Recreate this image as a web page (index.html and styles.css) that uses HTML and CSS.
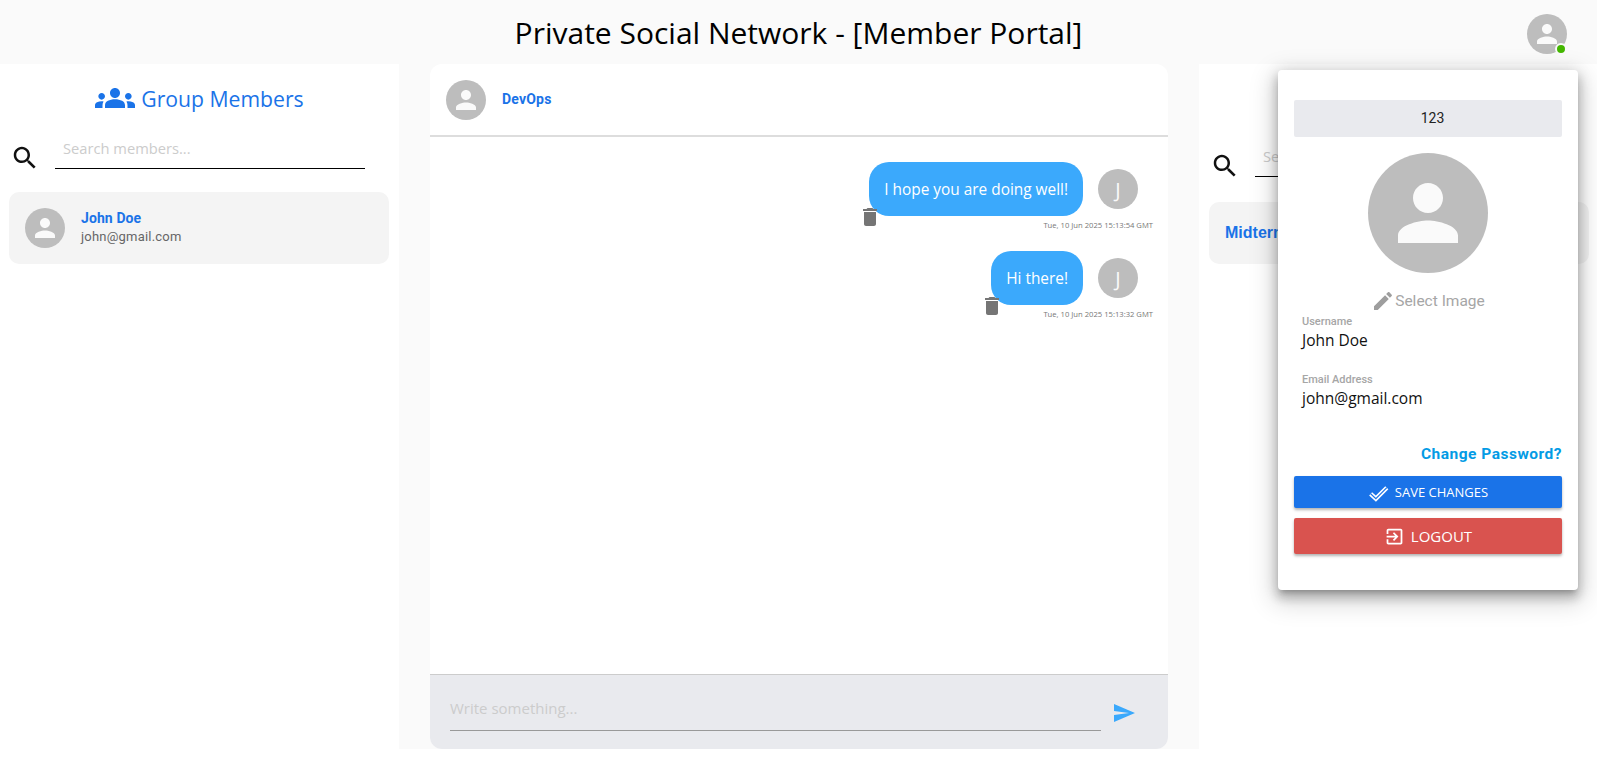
FILE: index.html
```html
<!DOCTYPE html>
<html lang="en">
<head>
    <meta charset="UTF-8">
    <meta name="viewport" content="width=device-width, initial-scale=1.0">
    <title>Private Social Network</title>
    <link rel="stylesheet" href="styles.css">
</head>
<body>
    <header class="topbar">
        <h1 class="topbar-title">Private Social Network - [Member Portal]</h1>
        <div class="account">
            <div class="avatar">
                <svg class="avatar-icon" viewBox="0 0 24 24"><path d="M12 12c2.21 0 4-1.79 4-4s-1.79-4-4-4-4 1.79-4 4 1.79 4 4 4zm0 2c-2.67 0-8 1.34-8 4v2h16v-2c0-2.66-5.33-4-8-4z"/></svg>
            </div>
            <span class="online-dot"></span>
        </div>
    </header>

    <main class="layout">
        <!-- members -->
        <section class="side-panel">
            <h2 class="panel-title">
                <svg class="panel-title-icon" viewBox="0 0 24 24"><path d="M12 12.75c1.63 0 3.07.39 4.24.9 1.08.48 1.76 1.56 1.76 2.73V18H6v-1.61c0-1.18.68-2.26 1.76-2.73 1.17-.52 2.61-.91 4.24-.91zM4 13c1.1 0 2-.9 2-2s-.9-2-2-2-2 .9-2 2 .9 2 2 2zm1.13 1.1c-.37-.06-.74-.1-1.13-.1-.99 0-1.93.21-2.78.58C.48 14.9 0 15.62 0 16.43V18h4.5v-1.61c0-.83.23-1.61.63-2.29zM20 13c1.1 0 2-.9 2-2s-.9-2-2-2-2 .9-2 2 .9 2 2 2zm4 3.43c0-.81-.48-1.53-1.22-1.85-.85-.37-1.79-.58-2.78-.58-.39 0-.76.04-1.13.1.4.68.63 1.46.63 2.29V18H24v-1.57zM12 6c1.66 0 3 1.34 3 3s-1.34 3-3 3-3-1.34-3-3 1.34-3 3-3z"/></svg>
                Group Members
            </h2>
            <div class="search-row">
                <svg class="search-icon" viewBox="0 0 24 24"><path d="M15.5 14h-.79l-.28-.27C15.41 12.59 16 11.11 16 9.5 16 5.91 13.09 3 9.5 3S3 5.91 3 9.5 5.91 16 9.5 16c1.61 0 3.09-.59 4.23-1.57l.27.28v.79l5 4.99L20.49 19l-4.99-5zm-6 0C7.01 14 5 11.99 5 9.5S7.01 5 9.5 5 14 7.01 14 9.5 11.99 14 9.5 14z"/></svg>
                <div class="search-field">Search members...</div>
            </div>
            <div class="member-card">
                <div class="avatar">
                    <svg class="avatar-icon" viewBox="0 0 24 24"><path d="M12 12c2.21 0 4-1.79 4-4s-1.79-4-4-4-4 1.79-4 4 1.79 4 4 4zm0 2c-2.67 0-8 1.34-8 4v2h16v-2c0-2.66-5.33-4-8-4z"/></svg>
                </div>
                <div class="member-info">
                    <div class="member-name">John Doe</div>
                    <div class="member-email">john@gmail.com</div>
                </div>
            </div>
        </section>

        <!-- chat -->
        <section class="chat">
            <div class="chat-header">
                <div class="avatar">
                    <svg class="avatar-icon" viewBox="0 0 24 24"><path d="M12 12c2.21 0 4-1.79 4-4s-1.79-4-4-4-4 1.79-4 4 1.79 4 4 4zm0 2c-2.67 0-8 1.34-8 4v2h16v-2c0-2.66-5.33-4-8-4z"/></svg>
                </div>
                <span class="chat-name">DevOps</span>
            </div>
            <div class="chat-messages">
                <div class="message">
                    <div class="message-row">
                        <div class="bubble">
                            I hope you are doing well!
                            <svg class="trash-icon" viewBox="0 0 24 24"><path d="M6 19c0 1.1.9 2 2 2h8c1.1 0 2-.9 2-2V7H6v12zM19 4h-3.5l-1-1h-5l-1 1H5v2h14V4z"/></svg>
                        </div>
                        <div class="avatar avatar-letter">J</div>
                    </div>
                    <div class="message-time">Tue, 10 Jun 2025 15:13:54 GMT</div>
                </div>
                <div class="message">
                    <div class="message-row">
                        <div class="bubble">
                            Hi there!
                            <svg class="trash-icon" viewBox="0 0 24 24"><path d="M6 19c0 1.1.9 2 2 2h8c1.1 0 2-.9 2-2V7H6v12zM19 4h-3.5l-1-1h-5l-1 1H5v2h14V4z"/></svg>
                        </div>
                        <div class="avatar avatar-letter">J</div>
                    </div>
                    <div class="message-time">Tue, 10 Jun 2025 15:13:32 GMT</div>
                </div>
            </div>
            <div class="chat-footer">
                <div class="chat-input">Write something...</div>
                <svg class="send-icon" viewBox="0 0 24 24"><path d="M2.01 21 23 12 2.01 3 2 10l15 2-15 2z"/></svg>
            </div>
        </section>

        <!-- exams -->
        <section class="side-panel side-panel-right">
            <div class="search-row">
                <svg class="search-icon" viewBox="0 0 24 24"><path d="M15.5 14h-.79l-.28-.27C15.41 12.59 16 11.11 16 9.5 16 5.91 13.09 3 9.5 3S3 5.91 3 9.5 5.91 16 9.5 16c1.61 0 3.09-.59 4.23-1.57l.27.28v.79l5 4.99L20.49 19l-4.99-5zm-6 0C7.01 14 5 11.99 5 9.5S7.01 5 9.5 5 14 7.01 14 9.5 11.99 14 9.5 14z"/></svg>
                <div class="search-field">Search</div>
            </div>
            <div class="exam-card">Midterm</div>
        </section>
    </main>

    <!-- profile menu -->
    <aside class="profile-menu">
        <div class="member-code">123</div>
        <div class="avatar avatar-large">
            <svg class="avatar-icon" viewBox="0 0 24 24"><path d="M12 12c2.21 0 4-1.79 4-4s-1.79-4-4-4-4 1.79-4 4 1.79 4 4 4zm0 2c-2.67 0-8 1.34-8 4v2h16v-2c0-2.66-5.33-4-8-4z"/></svg>
        </div>
        <div class="select-image">
            <svg class="edit-icon" viewBox="0 0 24 24"><path d="M3 17.25V21h3.75L17.81 9.94l-3.75-3.75L3 17.25zM20.71 7.04c.39-.39.39-1.02 0-1.41l-2.34-2.34c-.39-.39-1.02-.39-1.41 0l-1.83 1.83 3.75 3.75 1.83-1.83z"/></svg>
            Select Image
        </div>
        <div class="field">
            <div class="field-label">Username</div>
            <div class="field-value">John Doe</div>
        </div>
        <div class="field">
            <div class="field-label">Email Address</div>
            <div class="field-value">john@gmail.com</div>
        </div>
        <div class="change-password">Change Password?</div>
        <button class="btn btn-save" type="button">
            <svg class="btn-icon" viewBox="0 0 24 24">
                <polyline class="check-outer" points="3,13.5 9,19 21.5,6.5"/>
                <polyline class="check-inner" points="3,13.5 9,19 21.5,6.5"/>
            </svg>
            SAVE CHANGES
        </button>
        <button class="btn btn-logout" type="button">
            <svg class="btn-icon" viewBox="0 0 24 24"><path d="M10.09 15.59 11.5 17l5-5-5-5-1.41 1.41L12.67 11H3v2h9.67l-2.58 2.59zM19 3H5c-1.11 0-2 .9-2 2v4h2V5h14v14H5v-4H3v4c0 1.1.89 2 2 2h14c1.1 0 2-.9 2-2V5c0-1.1-.9-2-2-2z"/></svg>
            LOGOUT
        </button>
    </aside>
</body>
</html>
```

FILE: styles.css
```css
* {
    box-sizing: border-box;
}
html, body {
    height: 100%;
}
body {
    margin: 0;
    background-color: #fff;
    font-family: "Open Sans", sans-serif;
    overflow: hidden;
}
.topbar {
    height: 64px;
    background-color: #fafafa;
    display: flex;
    align-items: center;
    justify-content: center;
    position: relative;
}
.topbar-title {
    margin: 0;
    font-size: 30px;
    font-weight: 400;
    color: #000;
}
.account {
    position: absolute;
    top: 14px;
    left: 1527px;
}
.avatar {
    width: 40px;
    height: 40px;
    border-radius: 50%;
    background-color: #bdbdbd;
    display: flex;
    align-items: center;
    justify-content: center;
    flex-shrink: 0;
}
.avatar-icon {
    width: 75%;
    height: 75%;
    fill: #fafafa;
}
.avatar-letter {
    color: #fafafa;
    font-size: 20px;
}
.avatar-large {
    width: 120px;
    height: 120px;
    margin: 16px auto 0;
}
.online-dot {
    position: absolute;
    right: 0;
    bottom: -1px;
    width: 12px;
    height: 12px;
    border-radius: 50%;
    background-color: #44b700;
    border: 2px solid #fafafa;
}
.layout {
    display: grid;
    grid-template-columns: 399px 31px 738px 31px 398px;
    height: 685px;
    background-color: #fafafa;
}
.side-panel {
    grid-column: 1;
    background-color: #fff;
    padding-top: 16px;
}
.side-panel-right {
    grid-column: 5;
    padding-top: 77px;
}
.panel-title {
    margin: 0;
    display: flex;
    align-items: center;
    justify-content: center;
    gap: 6px;
    height: 36px;
    font-size: 21.2px;
    font-weight: 400;
    color: #1a73e8;
}
.panel-title-icon {
    width: 40px;
    height: 40px;
    fill: #1a73e8;
}
.search-row {
    display: flex;
    align-items: flex-end;
    height: 36px;
    margin-top: 17px;
    padding-left: 10px;
}
.side-panel-right .search-row {
    margin-top: 0;
    padding-left: 11px;
}
.search-icon {
    width: 30px;
    height: 30px;
    margin-bottom: -4px;
    fill: #111;
    flex-shrink: 0;
}
.search-field {
    width: 310px;
    height: 36px;
    margin-left: 15px;
    padding: 5px 0 0 8px;
    border-bottom: 1.5px solid #000;
    font-size: 14.7px;
    color: #ccc;
}
.member-card {
    display: flex;
    align-items: center;
    gap: 16px;
    height: 72px;
    margin: 23px 10px 0 9px;
    padding-left: 16px;
    background-color: #f4f4f4;
    border-radius: 10px;
}
.member-info {
    font-family: Roboto, sans-serif;
    letter-spacing: 0.2px;
}
.member-name {
    font-size: 14px;
    font-weight: 700;
    letter-spacing: 0.1px;
    color: #1a73e8;
    line-height: 18px;
}
.member-email {
    font-size: 13px;
    color: #666;
    line-height: 20px;
}
.exam-card {
    height: 62px;
    margin: 25px 8px 0 10px;
    padding-left: 16px;
    display: flex;
    align-items: center;
    background-color: #f4f4f4;
    border-radius: 10px;
    font-family: "Liberation Sans", sans-serif;
    font-weight: 700;
    font-size: 16px;
    color: #1a73e8;
}
.chat {
    grid-column: 3;
    display: flex;
    flex-direction: column;
    background-color: #fff;
    border-radius: 12px;
    overflow: hidden;
}
.chat-header {
    display: flex;
    align-items: center;
    gap: 16px;
    height: 73px;
    flex-shrink: 0;
    padding-left: 16px;
    border-bottom: 2px solid #ddd;
}
.chat-name {
    margin-top: -2px;
    font-family: Roboto, sans-serif;
    font-size: 14px;
    font-weight: 700;
    color: #1a73e8;
    letter-spacing: 0.2px;
}
.chat-messages {
    flex: 1;
    padding: 25px 15px 0 16px;
}
.message {
    margin-bottom: 24px;
    height: 65px;
}
.message-row {
    display: flex;
    justify-content: flex-end;
    align-items: center;
    gap: 15px;
    padding-right: 15px;
}
.bubble {
    position: relative;
    height: 54px;
    padding: 0 15px;
    display: flex;
    align-items: center;
    border-radius: 20px;
    background-color: #3ba9fc;
    color: #fff;
    font-size: 15.4px;
}
.trash-icon {
    position: absolute;
    left: -11px;
    top: 43px;
    width: 24px;
    height: 24px;
    fill: #757575;
}
.message-time {
    margin-top: 4px;
    text-align: right;
    font-size: 7.65px;
    line-height: 11px;
    color: #777;
}
.chat-footer {
    display: flex;
    align-items: flex-start;
    height: 75px;
    flex-shrink: 0;
    padding: 20px 0 0 20px;
    background-color: #e9eaee;
    border-top: 1px solid #ccc;
}
.chat-input {
    width: 651px;
    height: 36px;
    padding-top: 3px;
    border-bottom: 1px solid #999;
    font-size: 15px;
    color: #ccc;
}
.send-icon {
    width: 24px;
    height: 24px;
    margin: 6px 0 0 11px;
    fill: #3ba9fc;
}
.profile-menu {
    position: absolute;
    left: 1278px;
    top: 70px;
    width: 300px;
    height: 520px;
    padding: 30px 16px 0;
    background-color: #fff;
    border-radius: 4px;
    box-shadow: 0 5px 5px -3px rgba(0,0,0,0.2), 0 8px 10px 1px rgba(0,0,0,0.14), 0 3px 14px 2px rgba(0,0,0,0.12), 0 8px 24px 6px rgba(0,0,0,0.15);
}
.member-code {
    height: 37px;
    line-height: 37px;
    padding-left: 9px;
    text-align: center;
    background-color: #e9eaee;
    border-radius: 2px;
    font-family: Roboto, sans-serif;
    font-size: 14px;
    color: #222;
}
.select-image {
    display: flex;
    align-items: center;
    justify-content: center;
    height: 24px;
    margin-top: 16px;
    font-family: Roboto, sans-serif;
    font-size: 15.5px;
    color: #a6a6a6;
}
.edit-icon {
    width: 24px;
    height: 24px;
    fill: #9e9e9e;
}
.field {
    height: 58px;
    padding: 2px 0 0 8px;
}
.field-label {
    font-family: Roboto, sans-serif;
    font-size: 11px;
    font-weight: 500;
    line-height: 13px;
    color: #a6a6a6;
}
.field-value {
    font-size: 15.5px;
    line-height: 24px;
    color: #111;
}
.change-password {
    margin-top: 15px;
    text-align: right;
    font-family: Roboto, sans-serif;
    font-size: 15.5px;
    font-weight: 700;
    letter-spacing: 0.5px;
    line-height: 20px;
    color: #039be5;
}
.btn {
    display: flex;
    align-items: center;
    justify-content: center;
    gap: 6px;
    width: 100%;
    margin-top: 10px;
    border: none;
    border-radius: 2px;
    color: #fff;
    font-family: "Open Sans", sans-serif;
    font-size: 13px;
    box-shadow: 0 2px 3px rgba(0,0,0,0.3);
}
.btn-save {
    height: 32px;
    margin-top: 12px;
    background-color: #1a73e8;
}
.btn-logout {
    height: 36px;
    background-color: #d9534f;
    font-size: 15px;
}
.btn-icon {
    width: 21px;
    height: 21px;
    fill: #fff;
}
.check-outer {
    fill: none;
    stroke: #fff;
    stroke-width: 5;
}
.check-inner {
    fill: none;
    stroke: #1a73e8;
    stroke-width: 1.4;
}
```
